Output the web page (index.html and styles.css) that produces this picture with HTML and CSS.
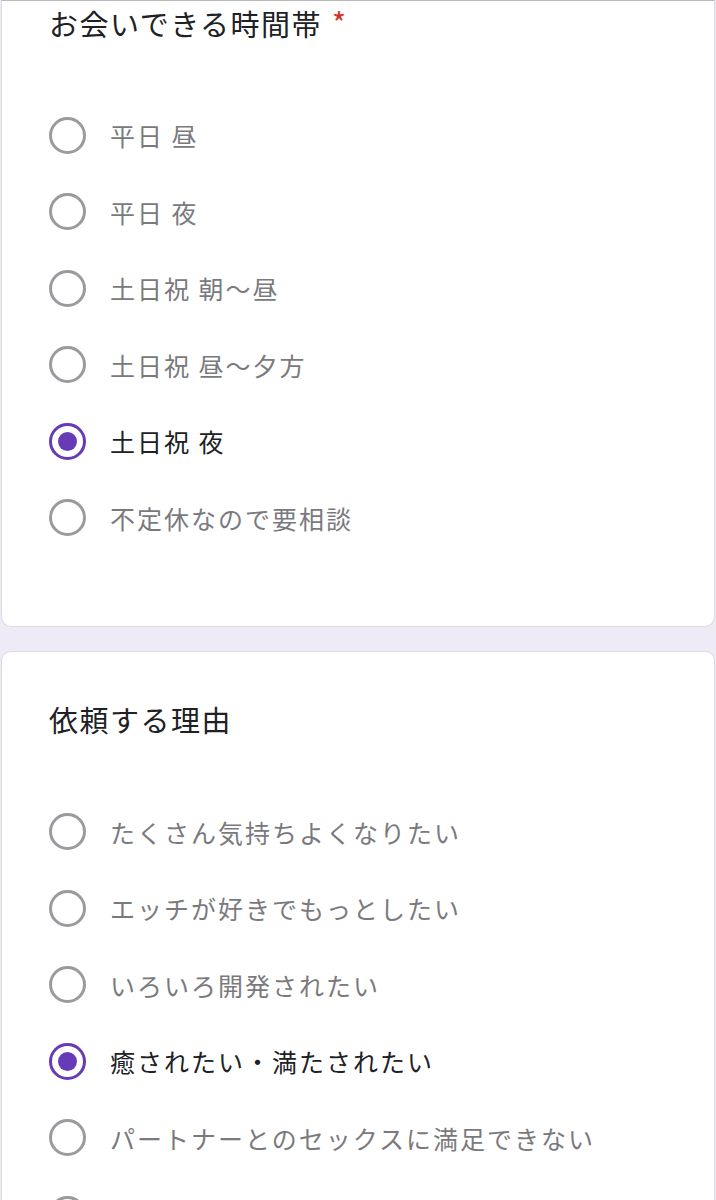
FILE: index.html
```html
<!DOCTYPE html>
<html lang="ja">
<head>
<meta charset="utf-8">
<link rel="stylesheet" href="styles.css">
</head>
<body>
<div class="card card-first">
  <div class="title">お会いできる時間帯<span class="req">*</span></div>
  <div class="options">
    <div class="opt"><span class="radio"></span><span class="label">平日 昼</span></div>
    <div class="opt"><span class="radio"></span><span class="label">平日 夜</span></div>
    <div class="opt"><span class="radio"></span><span class="label">土日祝 朝〜昼</span></div>
    <div class="opt"><span class="radio"></span><span class="label">土日祝 昼〜夕方</span></div>
    <div class="opt selected"><span class="radio"></span><span class="label">土日祝 夜</span></div>
    <div class="opt"><span class="radio"></span><span class="label">不定休なので要相談</span></div>
  </div>
</div>
<div class="card card-second">
  <div class="title">依頼する理由</div>
  <div class="options">
    <div class="opt"><span class="radio"></span><span class="label">たくさん気持ちよくなりたい</span></div>
    <div class="opt"><span class="radio"></span><span class="label">エッチが好きでもっとしたい</span></div>
    <div class="opt"><span class="radio"></span><span class="label">いろいろ開発されたい</span></div>
    <div class="opt selected"><span class="radio"></span><span class="label">癒されたい・満たされたい</span></div>
    <div class="opt"><span class="radio"></span><span class="label">パートナーとのセックスに満足できない</span></div>
    <div class="opt"><span class="radio"></span><span class="label"></span></div>
  </div>
</div>
</body>
</html>
```
FILE: styles.css
```css
html, body {
  margin: 0;
  padding: 0;
}
body {
  background: #eeebf6;
  font-family: "Noto Sans CJK JP", "Noto Sans", sans-serif;
  padding: 0 1px;
}
.card {
  background: #ffffff;
  border: 1px solid #dadce0;
  border-radius: 10px;
  box-sizing: border-box;
}
.card-first {
  border-top-color: #b8b8b8;
  border-radius: 0 0 10px 10px;
  padding: 1px 0 70px 0;
}
.card-second {
  margin-top: 24px;
  padding: 47px 0 0 0;
}
.title {
  font-size: 29px;
  line-height: 40px;
  height: 40px;
  letter-spacing: 1.5px;
  color: #202124;
  padding-left: 47px;
  white-space: nowrap;
}
.req {
  color: #d93025;
  font-size: 30px;
  margin-left: 10px;
  vertical-align: 1px;
}
.options {
  margin-top: 54.75px;
  display: flex;
  flex-direction: column;
}
.opt {
  height: 76.5px;
  display: flex;
  align-items: center;
  padding-left: 47px;
}
.radio {
  width: 37px;
  height: 37px;
  box-sizing: border-box;
  border: 3.5px solid #9a9a9f;
  border-radius: 50%;
  flex: none;
  display: flex;
  align-items: center;
  justify-content: center;
}
.selected .radio {
  border-color: #673ab7;
}
.selected .radio::after {
  content: "";
  width: 19px;
  height: 19px;
  border-radius: 50%;
  background: #673ab7;
}
.label {
  margin-left: 24px;
  font-size: 25px;
  letter-spacing: 2px;
  color: #7a7a7e;
  white-space: nowrap;
  line-height: 36px;
}
.selected .label {
  color: #202124;
}
```
